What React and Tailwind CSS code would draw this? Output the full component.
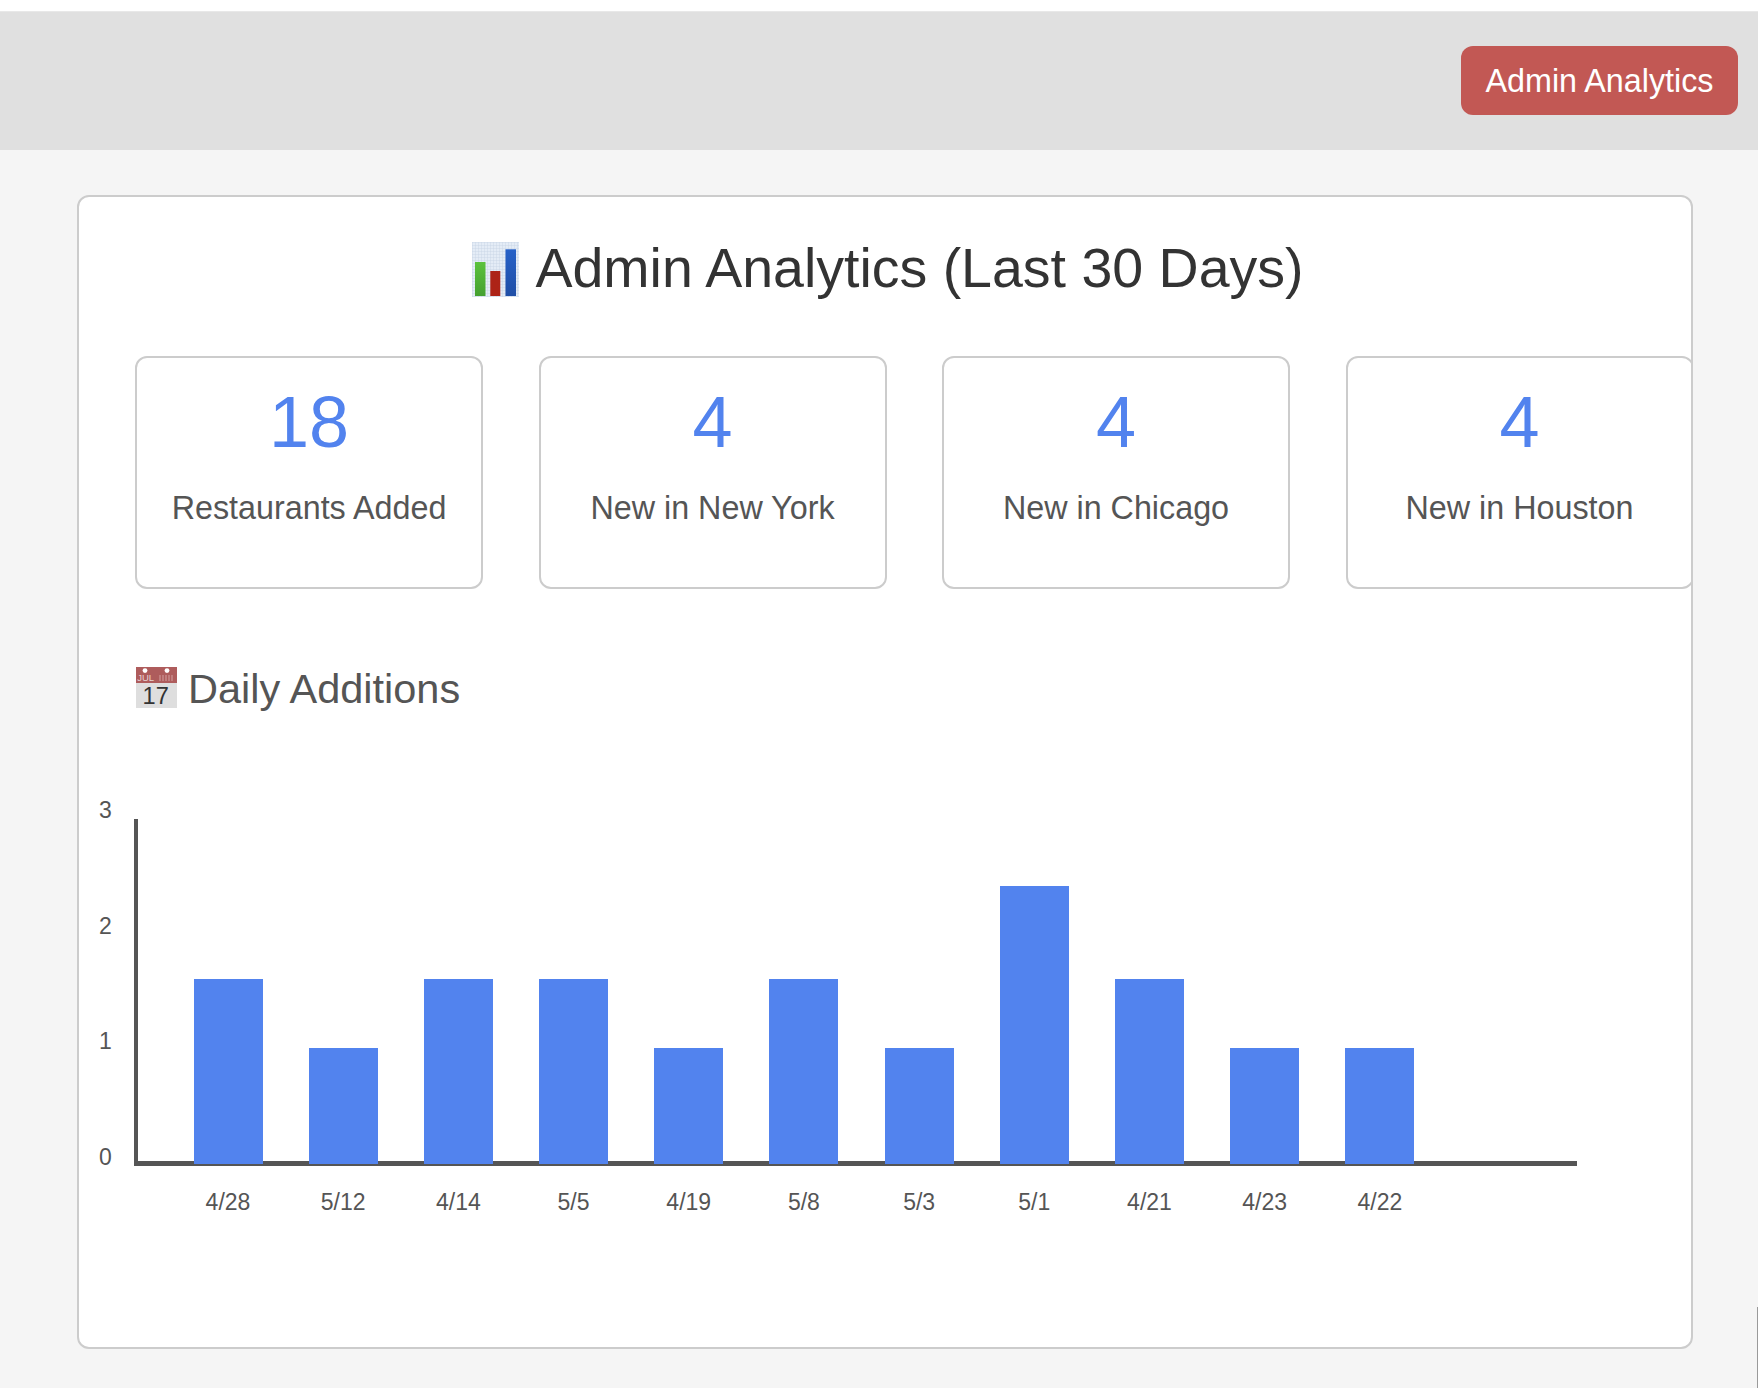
import React from 'react';

const stats = [
  { value: '18', label: 'Restaurants Added' },
  { value: '4', label: 'New in New York' },
  { value: '4', label: 'New in Chicago' },
  { value: '4', label: 'New in Houston' },
];

const daily = [
  { day: '4/28', count: 2 },
  { day: '5/12', count: 1 },
  { day: '4/14', count: 2 },
  { day: '5/5', count: 2 },
  { day: '4/19', count: 1 },
  { day: '5/8', count: 2 },
  { day: '5/3', count: 1 },
  { day: '5/1', count: 3 },
  { day: '4/21', count: 2 },
  { day: '4/23', count: 1 },
  { day: '4/22', count: 1 },
];

const barHeights = { 1: 116, 2: 185, 3: 278 };

const ChartEmoji = () => (
  <svg width="47" height="55" viewBox="0 0 47 55" className="shrink-0">
    <defs>
      <pattern id="grid" width="3" height="3" patternUnits="userSpaceOnUse">
        <rect width="3" height="3" fill="#e4ecf6" />
        <path d="M3 0H0V3" fill="none" stroke="#c6d3e4" strokeWidth="0.8" />
      </pattern>
      <linearGradient id="green" x1="0" y1="0" x2="0" y2="1">
        <stop offset="0" stopColor="#5cc23d" />
        <stop offset="1" stopColor="#45a030" />
      </linearGradient>
      <linearGradient id="blue" x1="0" y1="0" x2="0" y2="1">
        <stop offset="0" stopColor="#2661c8" />
        <stop offset="1" stopColor="#1f4ea6" />
      </linearGradient>
    </defs>
    <rect width="47" height="55" fill="url(#grid)" />
    <rect x="3" y="20" width="10.5" height="34" fill="url(#green)" />
    <rect x="18.3" y="29" width="10" height="25" fill="#ad2317" />
    <rect x="33.5" y="7.3" width="10.5" height="46.7" fill="url(#blue)" />
  </svg>
);

const CalendarEmoji = () => (
  <svg width="41" height="41" viewBox="0 0 41 41" className="mt-[3px] ml-px shrink-0">
    <rect width="41" height="41" fill="#dedede" />
    <rect width="41" height="16" fill="#ae5c5c" />
    <circle cx="9" cy="3.6" r="2.4" fill="#fff" />
    <circle cx="31" cy="3.6" r="2.4" fill="#fff" />
    <text x="9.7" y="13.5" fontSize="9.5" fill="#e8d3d3" textAnchor="middle" fontFamily="Liberation Sans, sans-serif">JUL</text>
    <path d="M24 8v6M27 8v6M30 8v6M33 8v6M36 8v6" stroke="#c98d8d" strokeWidth="1.4" />
    <text x="19.7" y="36.5" fontSize="23.6" fill="#333" textAnchor="middle" fontFamily="Liberation Sans, sans-serif">17</text>
  </svg>
);

export default function App() {
  return (
    <div className="relative min-h-[1388px] overflow-hidden bg-[#f5f5f5] font-['Liberation_Sans',Arial,sans-serif]">
      <div className="h-[12px] border-b border-[#e8e8e8] bg-white" />
      <header className="flex h-[138px] items-start justify-end bg-[#e0e0e0] pt-[34px] pr-5">
        <button className="flex h-[69px] w-[277px] items-center justify-center rounded-[12px] bg-[#c25854] pt-px text-[32.3px] text-white">
          Admin Analytics
        </button>
      </header>

      <main className="mt-[45px] ml-[77px] h-[1154px] w-[1616px] overflow-hidden rounded-[12px] border-2 border-[#cccccc] bg-white">
        <h1 className="mt-[30px] flex h-[84px] items-center justify-center gap-4 pl-[6px] text-[55.5px] leading-none text-[#333333]">
          <ChartEmoji />
          <span>Admin Analytics (Last 30 Days)</span>
        </h1>

        <section className="mt-[45px] flex gap-[55.5px] pl-14">
          {stats.map((s) => (
            <div
              key={s.label}
              className="flex h-[233px] w-[348px] shrink-0 flex-col items-center rounded-[12px] border-2 border-[#cccccc] bg-white pt-[22px]"
            >
              <div className="text-[72px] leading-[84px] text-[#5283ee]">{s.value}</div>
              <div className="mt-[24px] text-[32.3px] leading-[40px] text-[#555555]">{s.label}</div>
            </div>
          ))}
        </section>

        <h2 className="mt-[75px] flex items-start gap-[11px] pl-14 text-[41.5px] leading-[48px] text-[#555555]">
          <CalendarEmoji />
          <span className="pt-px">Daily Additions</span>
        </h2>

        <section className="mt-[106px] flex pl-5">
          <div className="-mt-[22px] flex h-[373px] w-[35px] flex-col-reverse justify-between text-[23px] leading-[26px] text-[#555555]">
            <span>0</span>
            <span>1</span>
            <span>2</span>
            <span>3</span>
          </div>
          <div>
            <div className="flex h-[347px] w-[1443px] items-end gap-[46.2px] border-b-[5px] border-l-[4px] border-b-[#555555] border-l-[#555555] pl-[55.5px]">
              {daily.map((d) => (
                <div
                  key={d.day}
                  className="-mb-[3px] w-[69px] shrink-0 bg-[#5283ee]"
                  style={{ height: barHeights[d.count] }}
                />
              ))}
            </div>
            <div className="mt-[23px] flex gap-[46.2px] pl-[59.5px] text-[23px] leading-[26px] text-[#555555]">
              {daily.map((d) => (
                <span key={d.day} className="w-[69px] shrink-0 text-center">
                  {d.day}
                </span>
              ))}
            </div>
          </div>
        </section>
      </main>

      <div className="absolute right-0 bottom-0 h-[81px] w-px bg-[#9a9a9a]" />
    </div>
  );
}
